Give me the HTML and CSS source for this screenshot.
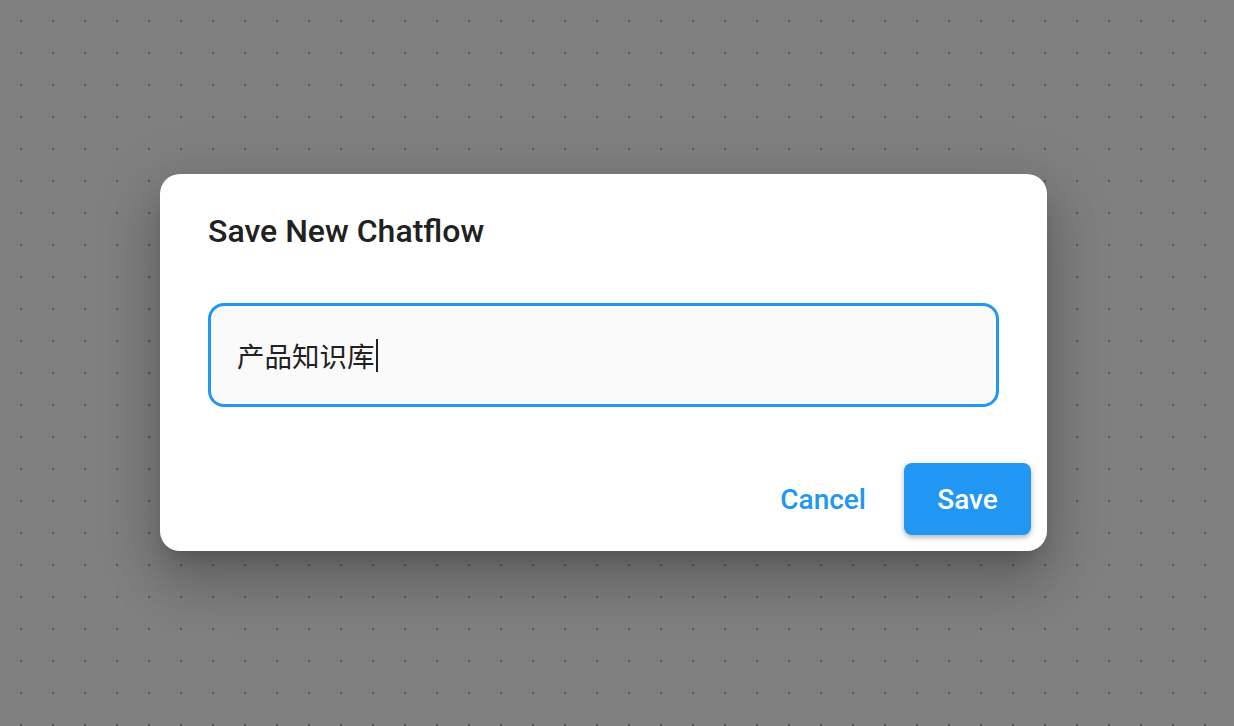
FILE: index.html
```html
<!DOCTYPE html>
<html lang="zh-CN">
<head>
    <meta charset="UTF-8">
    <meta name="viewport" content="width=device-width, initial-scale=1.0">
    <title>Save New Chatflow</title>
    <link rel="stylesheet" href="styles.css">
</head>
<body>
    <div class="canvas">
        <div class="dialog" role="dialog">
            <h2 class="dialog-title">Save New Chatflow</h2>
            <div class="dialog-content">
                <div class="text-field">
                    <span class="text-value">产品知识库</span><span class="caret"></span>
                </div>
            </div>
            <div class="dialog-actions">
                <button class="btn btn-text">Cancel</button>
                <button class="btn btn-primary">Save</button>
            </div>
        </div>
    </div>
</body>
</html>
```

FILE: styles.css
```css
html, body {
    margin: 0;
    height: 100%;
}
body {
    font-family: Roboto, "Noto Sans CJK SC", sans-serif;
    background-color: #808080;
    background-image: radial-gradient(circle, #565656 1px, transparent 1.3px);
    background-size: 32px 32px;
    background-position: 5px 5px;
    overflow: hidden;
}
.canvas {
    height: 100%;
    box-sizing: border-box;
    padding: 174px 0 0 160px;
}
.dialog {
    width: 887px;
    height: 377px;
    box-sizing: border-box;
    background: #fff;
    border-radius: 20px;
    box-shadow: 0 15px 21px -10px rgba(0,0,0,0.2),
                0 34px 53px 4px rgba(0,0,0,0.14),
                0 13px 64px 11px rgba(0,0,0,0.12);
    display: flex;
    flex-direction: column;
}
.dialog-title {
    margin: 0;
    padding: 37px 48px 0;
    font-size: 32px;
    font-weight: 500;
    line-height: 40px;
    color: #212121;
}
.dialog-content {
    padding: 52px 48px 0;
}
.text-field {
    height: 104px;
    box-sizing: border-box;
    border: 3px solid #2196f3;
    border-radius: 16px;
    background: #fafafa;
    display: flex;
    align-items: center;
    padding: 0 26px;
    color: #212121;
}
.text-value {
    font-family: "Noto Sans CJK SC", sans-serif;
    font-size: 27.5px;
    line-height: 34px;
}
.caret {
    width: 2px;
    height: 33px;
    background: #212121;
    margin-left: 1px;
}
.dialog-actions {
    margin-top: auto;
    padding: 0 16px 16px;
    display: flex;
    justify-content: flex-end;
    align-items: center;
    gap: 22px;
}
.btn {
    font-family: Roboto, sans-serif;
    font-size: 28px;
    font-weight: 500;
    border: none;
    border-radius: 8px;
    height: 72px;
    cursor: pointer;
}
.btn-text {
    background: none;
    color: #2196f3;
    padding: 0 16px;
}
.btn-primary {
    background: #2196f3;
    color: #fff;
    width: 127px;
    box-shadow: 0 3px 4px rgba(0,0,0,0.2), 0 1px 10px rgba(0,0,0,0.1);
}
```
